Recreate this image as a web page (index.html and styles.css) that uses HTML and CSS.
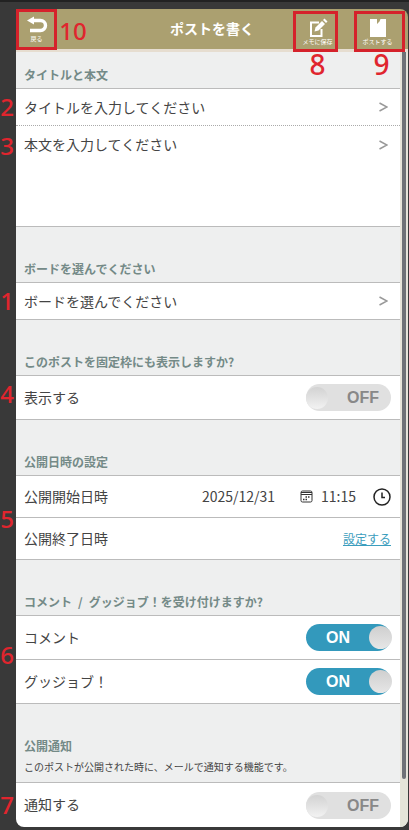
FILE: index.html
```html
<!DOCTYPE html>
<html lang="ja">
<head>
  <meta charset="UTF-8" />
  <meta name="viewport" content="width=device-width, initial-scale=1.0" />
  <title>ポストを書く</title>
  <link rel="stylesheet" href="styles.css">
</head>
<body>

  <form class="panel">
    <!-- Header bar with numbered callouts -->
    <header class="header">
      <button type="button" class="tool tool-back">
        <svg width="22" height="20" viewBox="0 0 22 20">
          <path d="M5 5.500H14.500a5 5 0 0 1 0 10H4" fill="none" stroke="#fff" stroke-width="3.400" />
          <path d="M1 5.500L8 1.500V9.500Z" fill="#fff" />
        </svg>
        <span>戻る</span>
      </button>
      <span class="mark mark-back">10</span>
      <h1>ポストを書く</h1>
      <div class="tools">
        <button type="button" class="tool tool-memo">
          <svg width="20" height="21" viewBox="0 0 20 21">
            <path d="M11 5.500H3V19H13.500V12" fill="none" stroke="#fff" stroke-width="2" />
            <path d="M6.500 14.500L7.500 10.500L14 4L17 7L10.500 13.500Z" fill="#fff" />
            <path d="M15 3L16.500 1.500L19.500 4.500L18 6Z" fill="#fff" />
          </svg>
          <span>メモに保存</span>
          <span class="mark mark-below">8</span>
        </button>
        <button type="button" class="tool tool-post">
          <svg width="18" height="20" viewBox="0 0 18 20">
            <path d="M1 1H8V6L10.500 3.500L11.500 1H17V19H1Z" fill="#fff" />
          </svg>
          <span>ポストする</span>
          <span class="mark mark-below">9</span>
        </button>
      </div>
    </header>

    <div class="body">
      <main class="content">
        <h2 class="first">タイトルと本文</h2>
        <button type="button" class="row row-title">
          <span class="mark">2</span>タイトルを入力してください
          <svg class="arrow" width="9" height="10" viewBox="0 0 9 10"><path d="M0.500 1L8 5L0.500 9" /></svg>
        </button>
        <button type="button" class="row row-text">
          <span class="mark">3</span>本文を入力してください
          <svg class="arrow" width="9" height="10" viewBox="0 0 9 10"><path d="M0.500 1L8 5L0.500 9" /></svg>
        </button>

        <h2>ボードを選んでください</h2>
        <button type="button" class="row">
          <span class="mark">1</span>ボードを選んでください
          <svg class="arrow" width="9" height="10" viewBox="0 0 9 10"><path d="M0.500 1L8 5L0.500 9" /></svg>
        </button>

        <h2>このポストを固定枠にも表示しますか?</h2>
        <div class="row row-switch">
          <span class="mark mark-high">4</span>
          <label for="pin">表示する</label>
          <span class="switch"><input type="checkbox" id="pin"><span class="state"></span></span>
        </div>

        <h2>公開日時の設定</h2>
        <div class="dates">
          <span class="mark">5</span>
          <div class="row row-date">
            <label for="date">公開開始日時</label>
            <span class="datetime">
              <input type="text" id="date" class="date" value="2025/12/31">
              <svg class="calendar" width="13" height="13" viewBox="0 0 13 13">
                <rect x="1" y="1" width="11" height="11" rx="1.500" fill="none" stroke="#333" />
                <path d="M1 2.500H12M1 4.500H12" stroke="#333" />
                <path d="M5.500 7H10M3 9.500H8" stroke="#333" stroke-width="1.500" stroke-dasharray="1.500 1" />
              </svg>
              <input type="text" class="time" value="11:15" aria-label="時刻">
              <svg width="18" height="18" viewBox="0 0 18 18" fill="none" stroke="#222">
                <circle cx="9" cy="9" r="8" stroke-width="1.500" />
                <path d="M9 4.500V9.500H12" stroke-width="1.500" />
              </svg>
            </span>
          </div>
          <div class="row row-date">
            <span class="label">公開終了日時</span>
            <a href="#">設定する</a>
          </div>
        </div>

        <h2>コメント&ensp;/&ensp;グッジョブ！を受け付けますか?</h2>
        <div class="row row-switch">
          <span class="mark mark-low">6</span>
          <label for="comment">コメント</label>
          <span class="switch"><input type="checkbox" id="comment" checked><span class="state"></span></span>
        </div>
        <div class="row row-switch">
          <label for="goodjob">グッジョブ！</label>
          <span class="switch"><input type="checkbox" id="goodjob" checked><span class="state"></span></span>
        </div>

        <div class="notice">
          <h3>公開通知</h3>
          <p>このポストが公開された時に、メールで通知する機能です。</p>
        </div>
        <div class="row row-switch row-last">
          <span class="mark">7</span>
          <label for="notify">通知する</label>
          <span class="switch"><input type="checkbox" id="notify"><span class="state"></span></span>
        </div>
      </main>
      <div class="scrollbar"><div class="thumb"></div></div>
    </div>
  </form>

</body>
</html>
```
FILE: styles.css
```css
* {
  box-sizing: border-box;
}

body {
  margin: 0;
  padding: 7px 1px 3px 16px;
  border-top: 2px solid #222;
  background: #393939;
  color: #444;
  font-family: "Noto Sans CJK JP", sans-serif;
  font-size: 14px;
  line-height: 20px;
}

button,
input {
  margin: 0;
  padding: 0;
  border: 0;
  background: none;
  color: inherit;
  font: inherit;
}

h1,
h2,
h3,
p {
  margin: 0;
}

/* Header */
.header {
  position: relative;
  display: flex;
  align-items: center;
  justify-content: space-between;
  height: 43px;
  padding-right: 3px;
  background: #aba070;
  border-bottom: 3px solid #e6ddd0;
  border-radius: 0 8px 0 0;
}

h1 {
  position: absolute;
  left: 0;
  right: 0;
  padding-bottom: 2px;
  text-align: center;
  font-size: 14px;
  color: #fff;
  pointer-events: none;
}

.tools {
  display: flex;
  gap: 16px;
  padding-top: 5px;
}

.tool {
  position: relative;
  display: flex;
  flex-direction: column;
  align-items: center;
  justify-content: center;
  height: 41px;
  border: 3px solid #d5222b;
  color: #fff;
  font-size: 6px;
  line-height: 8px;
  white-space: nowrap;
}

.tool-back {
  width: 41px;
}

.tool-memo {
  width: 45px;
  padding-left: 4px;
}

.tool-post {
  width: 51px;
  padding-right: 4px;
}

/* Red callout numbers */
.mark {
  position: absolute;
  left: -16px;
  width: 14px;
  text-align: center;
  font-family: "Noto Sans", sans-serif;
  font-size: 24px;
  font-weight: 500;
  line-height: 24px;
  color: #e0252e;
}

.mark-back {
  top: 10px;
  left: 43px;
  width: 28px;
}

.mark-below {
  top: 36px;
  left: 2px;
  width: 100%;
  font-size: 28px;
  line-height: 28px;
}

.mark-high {
  top: 6px;
}

.mark-low {
  top: 27px;
}

/* Form content */
.body {
  display: flex;
  background: #fff;
  border-radius: 0 0 8px 8px;
}

.content {
  flex: 1;
}

h2 {
  padding: 32px 8px 3px;
  background: #eeefef;
  border-bottom: 1px solid #bbb;
  font-size: 12px;
  line-height: 20px;
  color: #748a87;
}

h2.first {
  padding-top: 13px;
}

.row {
  position: relative;
  display: flex;
  align-items: center;
  justify-content: space-between;
  width: 100%;
  min-height: 37px;
  padding: 0 9px 0 8px;
  border-bottom: 1px solid #bbb;
  text-align: left;
}

.row label,
.row .label {
  padding-bottom: 2px;
}

.row-title {
  border-bottom: 1px dotted #aaa;
}

.row-text {
  align-items: flex-start;
  height: 101px;
  padding-top: 8px;
}

.row-switch {
  min-height: 44px;
}

.row-last {
  border-bottom: 0;
}

.arrow {
  margin-right: 3px;
  fill: none;
  stroke: #999;
  stroke-width: 1.5;
}

.row-text .arrow {
  margin-top: 6px;
}

/* Publication dates */
.dates {
  position: relative;
}

.dates > .mark {
  top: 31px;
}

.row-date {
  min-height: 42px;
}

.datetime {
  display: flex;
  align-items: center;
}

.datetime input {
  padding-bottom: 2px;
}

.date {
  width: 76px;
}

.calendar {
  margin: 0 8px 0 22px;
}

.time {
  width: 52px;
}

.row a {
  font-size: 12px;
  color: #3b9dbd;
}

/* Switches */
.switch {
  position: relative;
  display: block;
  width: 85px;
  height: 27px;
}

.switch input {
  appearance: none;
  display: block;
  width: 85px;
  height: 27px;
  border-radius: 14px;
  background: #e0e0e0;
}

.switch input::before {
  content: "";
  position: absolute;
  top: 3px;
  left: 0;
  width: 22px;
  height: 22px;
  border-radius: 50%;
  background: linear-gradient(#d2d2d2, #f2f2f2);
}

.switch input:checked {
  background: #3399bc;
}

.switch input:checked::before {
  top: 2px;
  left: 63px;
  width: 23px;
  height: 23px;
  background: linear-gradient(#cfcfcf, #e6e6e6);
}

.state {
  position: absolute;
  top: 4px;
  right: 12px;
  font-family: "Liberation Sans", Arial, sans-serif;
  font-size: 16px;
  font-weight: bold;
  color: #888;
  pointer-events: none;
}

.state::before {
  content: "OFF";
}

input:checked + .state {
  right: 41px;
  color: #fff;
}

input:checked + .state::before {
  content: "ON";
}

/* Notification heading with a note */
.notice {
  padding: 30px 8px 5px;
  background: #eeefef;
  border-bottom: 1px solid #bbb;
}

h3 {
  font-size: 12px;
  line-height: 23px;
  color: #748a87;
}

.notice p {
  font-size: 10px;
  line-height: 20px;
}

/* Scrollbar */
.scrollbar {
  width: 8px;
  padding: 0 2px 48px;
  background: #e5e5d9;
  border-radius: 0 0 8px 0;
  display: flex;
}

.thumb {
  flex: 1;
  background: #6e7276;
  border-radius: 0 0 2px 2px;
}
```
